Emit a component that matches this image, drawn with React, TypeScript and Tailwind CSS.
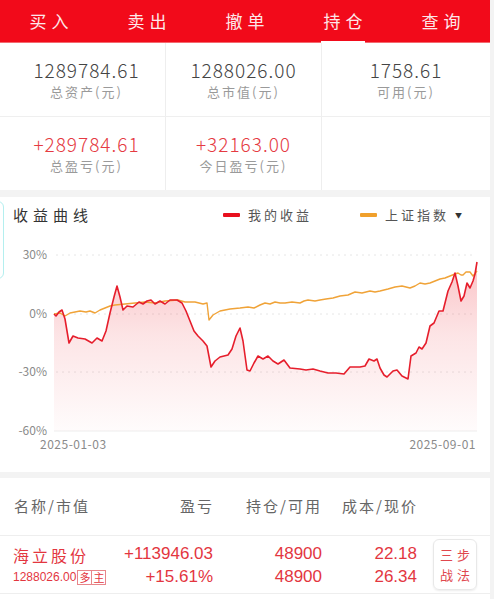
import React from 'react';

const FONT = { fontFamily: '"Noto Sans CJK SC", "Noto Sans", sans-serif' };
const NUM = { fontFamily: '"Liberation Sans", Arial, sans-serif' };

const tabs = ['买入', '卖出', '撤单', '持仓', '查询'];

// chart points in page coordinates (x, y)
const myCurve: [number, number][] = [
  [54, 313], [56, 315], [59, 311], [62, 309], [65, 318], [69, 342], [73, 335], [78, 337], [85, 338],
  [92, 342], [97, 337], [102, 340], [106, 330], [110, 312], [114, 296], [117, 285], [120, 296],
  [123, 309], [127, 305], [133, 306], [139, 301], [143, 303], [147, 300], [151, 299], [155, 303],
  [160, 300], [165, 303], [170, 299], [177, 299], [182, 302], [186, 310], [190, 320], [194, 330],
  [198, 335], [203, 340], [207, 345], [211, 366], [215, 360], [220, 356], [228, 354], [232, 348],
  [236, 335], [240, 327], [243, 340], [247, 369], [250, 370], [254, 362], [258, 355], [263, 358],
  [268, 355], [273, 360], [278, 363], [284, 359], [290, 367], [300, 368], [306, 369], [313, 368],
  [320, 370], [328, 372], [336, 372], [344, 373], [350, 366], [360, 366], [365, 365], [369, 358],
  [374, 360], [377, 358], [380, 367], [384, 374], [387, 376], [393, 370], [397, 369], [402, 375],
  [408, 378], [411, 355], [416, 352], [419, 346], [422, 348], [426, 342], [430, 325], [434, 322],
  [439, 310], [443, 310], [448, 290], [452, 281], [455, 272], [458, 285], [461, 300], [464, 295],
  [467, 282], [470, 287], [473, 280], [475, 273], [477, 261],
];

const indexCurve: [number, number][] = [
  [54, 313], [60, 312], [65, 315], [70, 312], [80, 310], [86, 311], [90, 310], [95, 312], [100, 309],
  [105, 307], [110, 305], [115, 304], [125, 303], [135, 302], [145, 301], [155, 302], [165, 300],
  [178, 299], [185, 301], [195, 301], [203, 303], [207, 302], [209, 319], [213, 314], [220, 310],
  [230, 308], [240, 307], [248, 306], [254, 307], [260, 304], [265, 302], [270, 303], [275, 301],
  [280, 302], [285, 302], [292, 301], [300, 302], [304, 300], [308, 299], [315, 300], [320, 299],
  [326, 298], [333, 297], [340, 295], [348, 294], [355, 291], [362, 292], [370, 290], [375, 291],
  [380, 290], [388, 288], [395, 286], [402, 285], [410, 287], [415, 285], [420, 282], [425, 283],
  [430, 282], [435, 280], [440, 278], [445, 277], [450, 275], [455, 273], [458, 272], [461, 274],
  [463, 274], [466, 271], [470, 271], [473, 275], [477, 270],
];

const toPath = (pts: [number, number][]) =>
  pts.map(([x, y], i) => `${i === 0 ? 'M' : 'L'}${x} ${y}`).join(' ');

const fillPath = `${toPath(myCurve)} L477 430 L54 430 Z`;

const Stat = ({ value, label, red, border = true }: { value: string; label: string; red?: boolean; border?: boolean }) => (
  <div className={`flex flex-col items-center justify-center h-[73px] ${border ? 'border-r border-[#eeeeee]' : ''}`}>
    <div className={`text-[19px] leading-[24px] tracking-[1px] font-light ${red ? 'text-[#e53a42]' : 'text-[#444]'}`}>{value}</div>
    <div className="text-[13px] leading-[18px] tracking-[2px] text-[#9a9a9a] mt-[1px]">{label}</div>
  </div>
);

export default function App() {
  return (
    <div className="w-[494px] h-[599px] bg-[#f3f3f3] overflow-hidden" style={FONT}>
      <div className="w-[490px] h-full bg-[#f3f3f3] relative">
        {/* Tabs */}
        <div className="h-[43px] bg-[#f20a1a] grid grid-cols-5 border-b border-[#f36a70]">
          {tabs.map((t, i) => (
            <div key={t} className="relative flex items-center justify-center">
              <span className="text-[17px] tracking-[5px] text-[#fde8ea] pl-[5px]">{t}</span>
              {i === 3 && <div className="absolute bottom-[-1px] left-1/2 -translate-x-1/2 w-[44px] h-[2px] bg-white" />}
            </div>
          ))}
        </div>

        {/* Stats */}
        <div className="bg-white">
          <div className="grid grid-cols-[166px_156px_1fr] border-b border-[#efefef]">
            <div className="pl-[8px]"><Stat value="1289784.61" label="总资产(元)" /></div>
            <Stat value="1288026.00" label="总市值(元)" />
            <Stat value="1758.61" label="可用(元)" border={false} />
          </div>
          <div className="grid grid-cols-[166px_156px_1fr]">
            <div className="pl-[8px]"><Stat value="+289784.61" label="总盈亏(元)" red /></div>
            <Stat value="+32163.00" label="今日盈亏(元)" red />
            <div />
          </div>
        </div>

        {/* Chart card */}
        <div className="mt-[7px] bg-white h-[275px] relative">
          <div className="absolute left-[-12px] top-[4px] w-[16px] h-[78px] rounded-[6px] border-[1.5px] border-[#b4efef]" />
          <div className="h-[36px] flex items-center pl-[13px] pr-[28px]">
            <span className="text-[15px] tracking-[5px] text-[#333]">收益曲线</span>
            <div className="ml-auto flex items-center">
              <span className="w-[17px] h-[4px] bg-[#e8101e] rounded-[1px]" />
              <span className="ml-[8px] text-[13px] tracking-[3px] text-[#555]">我的收益</span>
              <span className="ml-[48px] w-[17px] h-[4px] bg-[#f0a02c] rounded-[1px]" />
              <span className="ml-[8px] text-[13px] tracking-[3px] text-[#555]">上证指数</span>
              <span className="ml-[6px] text-[7px] text-[#333]">▼</span>
            </div>
          </div>
          <svg width="490" height="239" viewBox="0 232 490 239" className="block">
            <defs>
              <linearGradient id="fillG" gradientUnits="userSpaceOnUse" x1="0" y1="258" x2="0" y2="430">
                <stop offset="0" stopColor="#f03a44" stopOpacity="0.32" />
                <stop offset="0.45" stopColor="#f05a62" stopOpacity="0.16" />
                <stop offset="1" stopColor="#f05a62" stopOpacity="0.02" />
              </linearGradient>
            </defs>
            {[254, 313, 371].map((y) => (
              <line key={y} x1="56" x2="476" y1={y} y2={y} stroke="#e6e6e6" strokeWidth="1" strokeDasharray="2 4" />
            ))}
            <line x1="54" x2="477" y1="430" y2="430" stroke="#eeeeee" strokeWidth="1" />
            <path d={fillPath} fill="url(#fillG)" />
            <path d={toPath(indexCurve)} fill="none" stroke="#f0a338" strokeWidth="1.4" strokeLinejoin="round" />
            <path d={toPath(myCurve)} fill="none" stroke="#e61e2c" strokeWidth="1.6" strokeLinejoin="round" />
            <g fill="#8a8a8a" fontSize="12" textAnchor="end" style={FONT}>
              <text x="47" y="258">30%</text>
              <text x="47" y="317">0%</text>
              <text x="47" y="375">-30%</text>
              <text x="47" y="434">-60%</text>
            </g>
            <g fill="#8a8a8a" fontSize="12" style={FONT}>
              <text x="40" y="448" letterSpacing="0.5">2025-01-03</text>
              <text x="476" y="448" textAnchor="end" letterSpacing="0.5">2025-09-01</text>
            </g>
          </svg>
        </div>

        {/* Holdings table */}
        <div className="mt-[6px] bg-white h-[122px]">
          <div className="h-[58px] grid grid-cols-[110px_90px_109px_95px_1fr] items-center pl-[14px] border-b border-[#eeeeee] text-[15px] tracking-[2px] text-[#666]">
            <span>名称/市值</span>
            <span className="text-right">盈亏</span>
            <span className="text-right pr-[1px]">持仓/可用</span>
            <span className="text-right">成本/现价</span>
            <span />
          </div>
          <div className="h-[58px] grid grid-cols-[110px_90px_109px_95px_1fr] items-center pl-[13px] border-b border-[#eeeeee] text-[#e3363f]">
            <div className="flex flex-col">
              <div className="text-[16px] leading-[23px] tracking-[3px]">海立股份</div>
              <div className="flex items-center text-[12px] leading-[16px] mt-[2px]">
                <span style={NUM}>1288026.00</span>
                <span className="ml-[1px] border border-[#e8868a] px-[1px] leading-[13px] text-[11px]">多</span>
                <span className="border border-l-0 border-[#e8868a] px-[1px] leading-[13px] text-[11px]">主</span>
              </div>
            </div>
            <div className="flex flex-col items-end text-[17px] leading-[23px]" style={NUM}>
              <div>+113946.03</div>
              <div>+15.61%</div>
            </div>
            <div className="flex flex-col items-end text-[17px] leading-[23px]" style={NUM}>
              <div>48900</div>
              <div>48900</div>
            </div>
            <div className="flex flex-col items-end text-[17px] leading-[23px]" style={NUM}>
              <div>22.18</div>
              <div>26.34</div>
            </div>
            <div className="pl-[16px]">
              <div className="w-[44px] h-[51px] rounded-[6px] border border-[#e8e8e8] shadow-[0_1px_2px_rgba(0,0,0,0.08)] flex flex-col items-center justify-center text-[13px] leading-[20px] tracking-[4px] text-[#e0474e]">
                <span className="pl-[4px]">三步</span>
                <span className="pl-[4px]">战法</span>
              </div>
            </div>
          </div>
        </div>
      </div>
    </div>
  );
}
